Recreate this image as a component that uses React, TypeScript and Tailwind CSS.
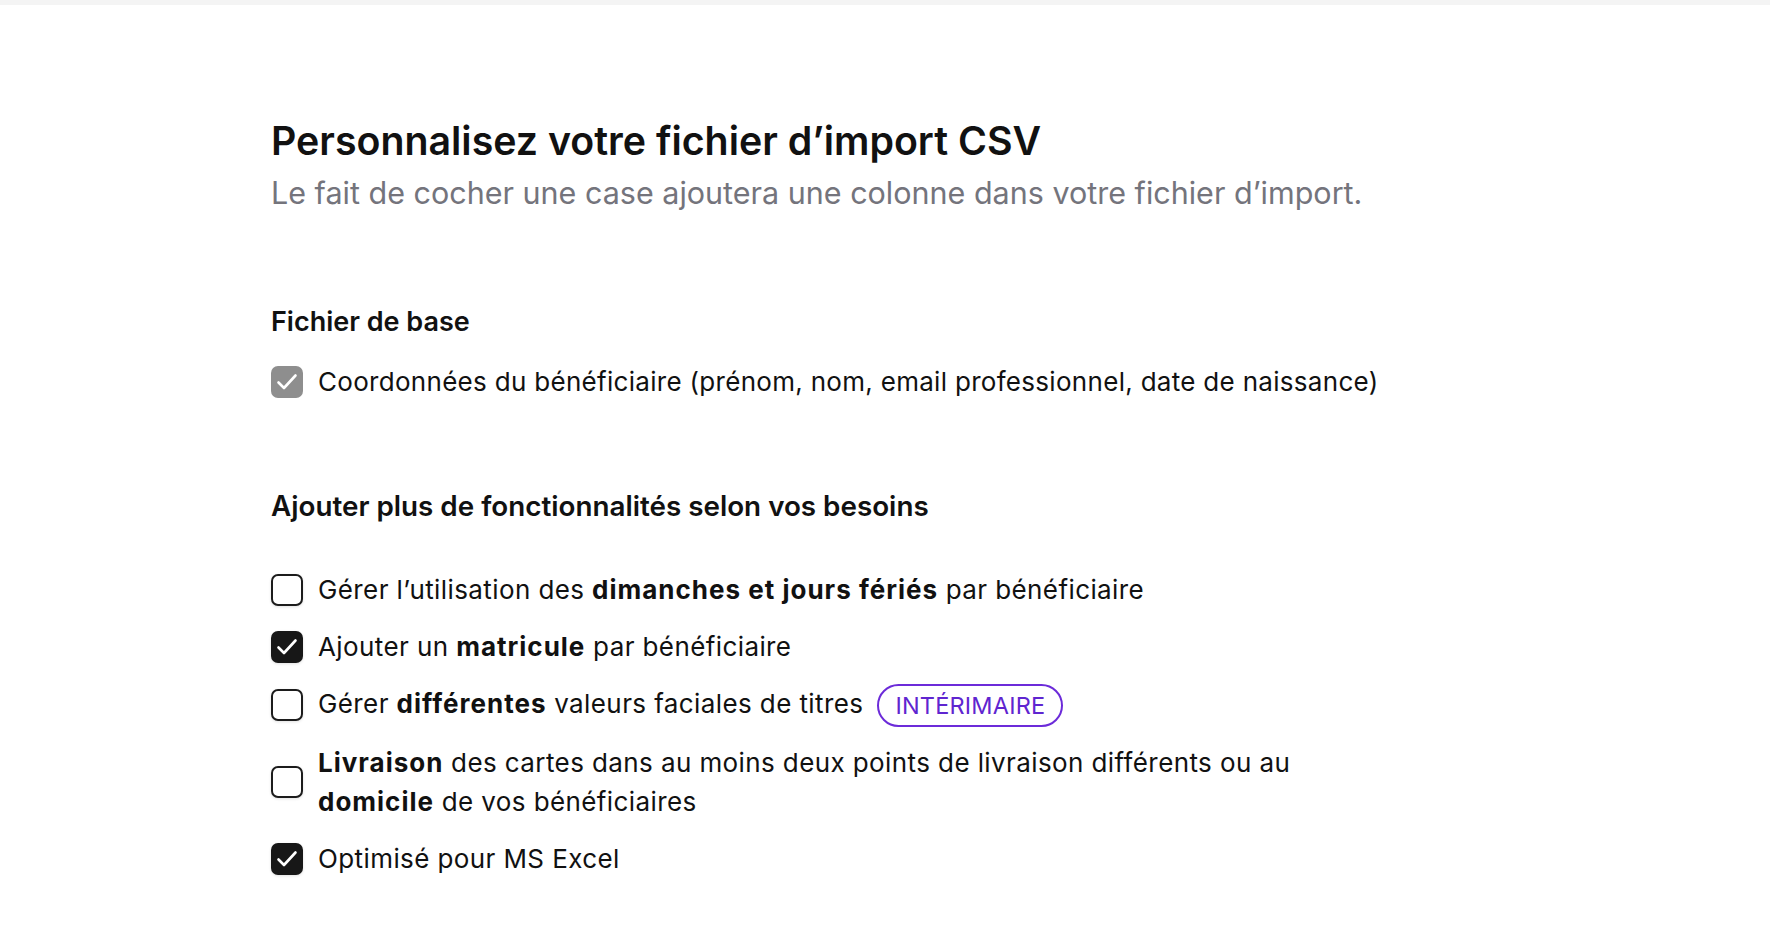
import React, { useState } from 'react';

type Row = { id: string; label: React.ReactNode; checked: boolean; badge?: string };

const CheckIcon = () => (
  <svg viewBox="0 0 32 32" className="w-[32px] h-[32px]" fill="none" stroke="white" strokeWidth={2.6} strokeLinecap="round" strokeLinejoin="round">
    <path d="M7.5 16.5l5.5 5.5L24.5 9.5" />
  </svg>
);

const Box = ({ checked, disabled, onClick }: { checked: boolean; disabled?: boolean; onClick?: () => void }) => {
  if (disabled) {
    return (
      <span className="w-[32px] h-[32px] shrink-0 rounded-[7px] bg-[#8e8e8e] flex items-center justify-center">
        <CheckIcon />
      </span>
    );
  }
  return (
    <button
      type="button"
      onClick={onClick}
      className={`w-[32px] h-[32px] shrink-0 rounded-[7px] flex items-center justify-center shadow-[0_1px_3px_rgba(0,0,0,0.12)] ${checked ? 'bg-[#171717]' : 'bg-white border-2 border-[#1c1c1c]'}`}
    >
      {checked && <CheckIcon />}
    </button>
  );
};

const B = ({ children }: { children: React.ReactNode }) => <b className="font-bold tracking-[1px]">{children}</b>;

const initialRows: Row[] = [
  { id: 'dim', label: <>Gérer l’utilisation des <B>dimanches et jours fériés</B> par bénéficiaire</>, checked: false },
  { id: 'mat', label: <>Ajouter un <B>matricule</B> par bénéficiaire</>, checked: true },
  { id: 'val', label: <>Gérer <B>différentes</B> valeurs faciales de titres</>, checked: false, badge: 'INTÉRIMAIRE' },
  { id: 'liv', label: <><B>Livraison</B> des cartes dans au moins deux points de livraison différents ou au <B>domicile</B> de vos bénéficiaires</>, checked: false },
  { id: 'xls', label: <>Optimisé pour MS Excel</>, checked: true },
];

export default function App() {
  const [rows, setRows] = useState<Row[]>(initialRows);
  const toggle = (id: string) => setRows(prev => prev.map(r => r.id === id ? { ...r, checked: !r.checked } : r));

  return (
    <div className="min-h-[928px] bg-white text-[#111111] font-['Inter','Noto_Sans',sans-serif]">
      <div className="h-[5px] bg-[#f4f4f4]" />
      <div className="pl-[271px] pt-[114px]">
        <h1 className="text-[39.3px] leading-[44px] font-semibold">Personnalisez votre fichier d’import CSV</h1>
        <p className="mt-[11px] text-[30.5px] leading-[38px] text-[#74747c]">Le fait de cocher une case ajoutera une colonne dans votre fichier d’import.</p>

        <h2 className="mt-[93px] text-[27px] leading-[34px] font-semibold">Fichier de base</h2>
        <div className="mt-[23px] flex items-center gap-[15px] text-[26px] leading-[40px] tracking-[0.3px]">
          <Box checked disabled />
          <span>Coordonnées du bénéficiaire (prénom, nom, email professionnel, date de naissance)</span>
        </div>

        <h2 className="mt-[87px] text-[27.8px] leading-[34px] font-semibold">Ajouter plus de fonctionnalités selon vos besoins</h2>
        <ul className="mt-[47px] flex flex-col gap-[18px] text-[26px] leading-[39px] tracking-[0.4px]">
          {rows.map(r => (
            <li key={r.id} className="flex items-center gap-[15px]">
              <Box checked={r.checked} onClick={() => toggle(r.id)} />
              <span className="max-w-[1060px]">
                {r.label}
                {r.badge && (
                  <span className="ml-[14px] -my-[2px] inline-flex items-center h-[43px] px-[16px] rounded-full border-2 border-[#6c2bd9] text-[#5f25d0] text-[23.5px] leading-none tracking-[0.2px] align-middle">
                    {r.badge}
                  </span>
                )}
              </span>
            </li>
          ))}
        </ul>
      </div>
    </div>
  );
}
